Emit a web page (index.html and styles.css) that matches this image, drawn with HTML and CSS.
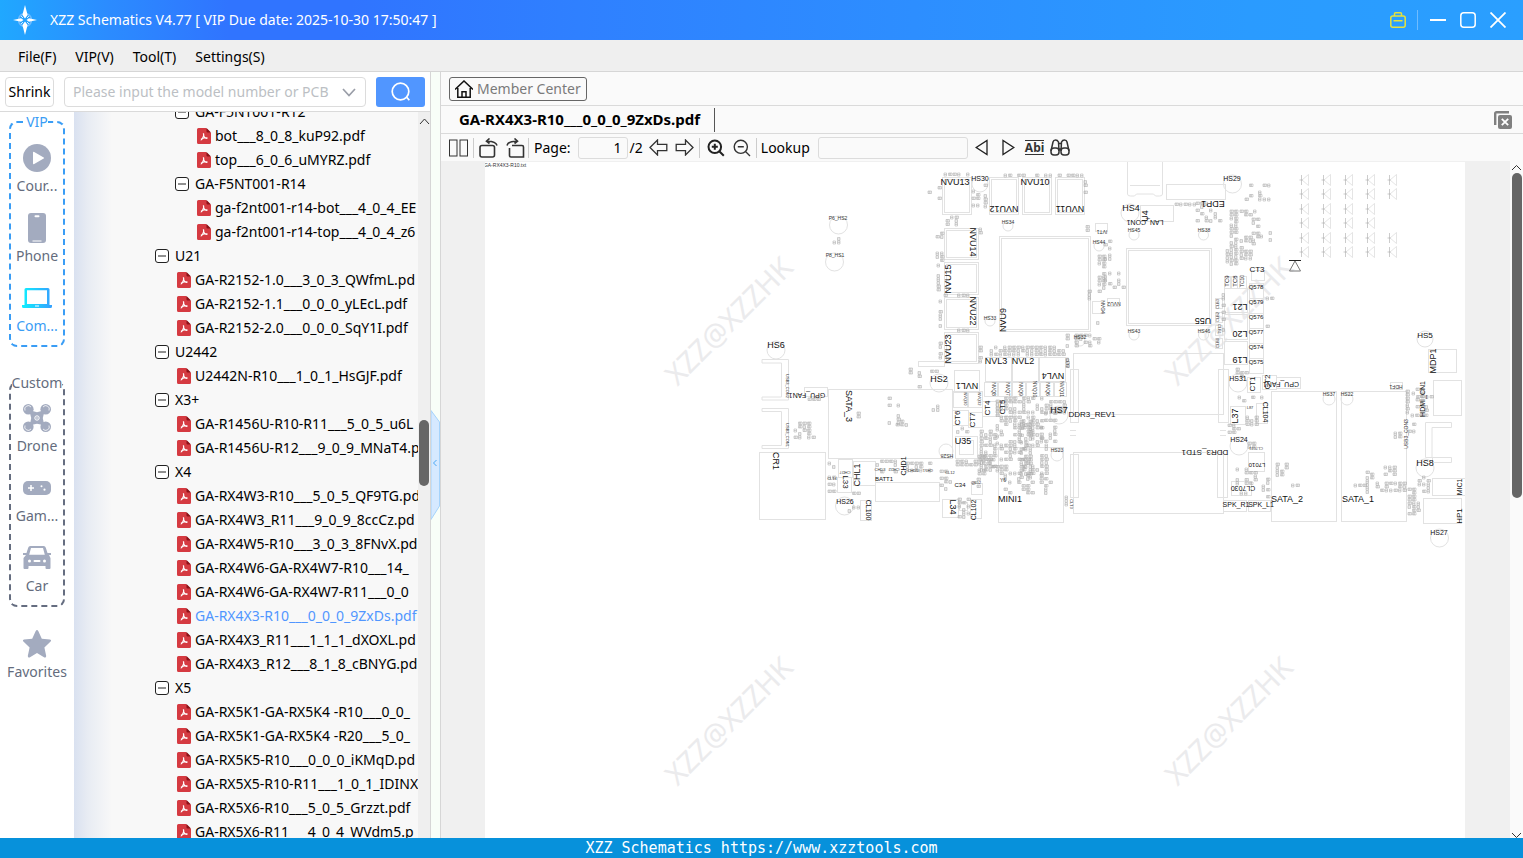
FILE: index.html
```html
<!DOCTYPE html>
<html lang="en">
<head>
<meta charset="utf-8">
<title>XZZ Schematics V4.77</title>
<link rel="stylesheet" href="styles.css">
</head>
<body>
<svg class="defs" aria-hidden="true">
  <symbol id="pdf" viewBox="0 0 14 16">
    <path d="M1.5 0H9l5 5v9.500a1.500 1.500 0 0 1-1.500 1.500h-11A1.500 1.500 0 0 1 0 14.500v-13A1.500 1.500 0 0 1 1.500 0z" fill="#d53a41"/>
    <path d="M9.500 0 14 4.500h-3.500a1 1 0 0 1-1-1z" fill="#8c1219"/>
    <path d="M6.300 5.500c.8 0 .3 2.400-.2 3.500C5.500 10.500 4.500 12.200 3.700 12M4 11.200c1-.7 2-1 3-1.200 1.400-.3 3.400-.4 3.400.4M10 10.500C8.500 10.500 6.800 9 6.300 5.500" fill="none" stroke="#fff" stroke-width="1.100"/>
  </symbol>
  <symbol id="minus" viewBox="0 0 14 14">
    <rect x=".5" y=".5" width="13" height="13" rx="2.500" fill="#fff" stroke="#222"/>
    <path d="M3 7h8" stroke="#222"/>
  </symbol>
</svg>

<header class="titlebar">
  <svg class="logo" width="24" height="30" viewBox="0 0 24 30">
    <circle cx="12" cy="15" r="6.500" fill="none" stroke="#6dbbff" stroke-width="1.500"/>
    <path d="M12 0l2.600 10L12 13.500 9.400 10zM12 30l2.600-10L12 16.500 9.400 20zM0 15l8-1.700L10.500 15 8 16.700zM24 15l-8-1.700L13.500 15l2.500 1.700z" fill="#fff"/>
    <path d="M8 11l2 2M16 11l-2 2M8 19l2-2M16 19l-2-2" stroke="#d5ecff"/>
  </svg>
  <h1 class="title">XZZ Schematics V4.77 [ VIP Due date: 2025-10-30 17:50:47 ]</h1>
  <button class="winbtn" aria-label="License"><svg width="16" height="16" viewBox="0 0 16 16" fill="none" stroke="#e6e23c" stroke-width="1.500"><rect x=".8" y="4" width="14.400" height="11.200" rx="2"/><path d="M4.500 4V1.800a1 1 0 0 1 1-1h5a1 1 0 0 1 1 1V4M3.500 8.800h9"/></svg></button>
  <span class="winsep"></span>
  <button class="winbtn" aria-label="Minimize"><svg width="16" height="16" viewBox="0 0 16 16"><path d="M0 8h16" stroke="#fff" stroke-width="2"/></svg></button>
  <button class="winbtn" aria-label="Maximize"><svg width="16" height="16" viewBox="0 0 16 16"><rect x=".8" y=".8" width="14.400" height="14.400" rx="3" fill="none" stroke="#fff" stroke-width="1.500"/></svg></button>
  <button class="winbtn" aria-label="Close"><svg width="16" height="16" viewBox="0 0 16 16"><path d="M.5.5l15 15M15.500.5l-15 15" stroke="#fff" stroke-width="1.800"/></svg></button>
</header>

<nav class="menubar">
  <button>File(F)</button><button>VIP(V)</button><button>Tool(T)</button><button>Settings(S)</button>
</nav>

<div class="workspace">
  <aside class="side">
    <div class="search">
      <button class="shrink">Shrink</button>
      <div class="combo">
        <input type="text" aria-label="Model number or PCB" placeholder="Please input the model number or PCB">
        <button aria-label="Show history"><svg width="14" height="9" viewBox="0 0 14 9"><path d="M1 1l6 6.500L13 1" fill="none" stroke="#9a9ea8" stroke-width="1.700"/></svg></button>
      </div>
      <button class="go" aria-label="Search"><svg width="20" height="20" viewBox="0 0 20 20" fill="none" stroke="#fff" stroke-width="1.700"><circle cx="9.500" cy="9.500" r="8.300"/><path d="M15.500 15l2.800 3.300"/></svg></button>
    </div>
    <div class="sidebody">
      <div class="rail">
        <fieldset class="group vip">
          <legend>VIP</legend>
          <button class="item"><span class="pic"><svg width="28" height="28" viewBox="0 0 28 28"><circle cx="14" cy="14" r="14" fill="#a3abbf"/><path d="M10 8.500v11a.8.8 0 0 0 1.200.6l9.500-5.500a.7.7 0 0 0 0-1.200l-9.500-5.500a.8.8 0 0 0-1.200.6z" fill="#fff"/></svg></span>Cour...</button>
          <button class="item"><span class="pic"><svg width="18" height="30" viewBox="0 0 18 30"><rect width="18" height="30" rx="3" fill="#a3abbf"/><path d="M7.500 3.200h3" stroke="#fff" stroke-width="2" stroke-linecap="round"/><path d="M4.500 28h9" stroke="#fff"/></svg></span>Phone</button>
          <button class="item on"><span class="pic"><svg width="30" height="20" viewBox="0 0 30 20"><defs><linearGradient id="lap"><stop offset="0" stop-color="#0ff0ff"/><stop offset="1" stop-color="#35a0ff"/></linearGradient></defs><path fill="url(#lap)" fill-rule="evenodd" d="M4 0h22a1.500 1.500 0 0 1 1.500 1.500V17H30v1.500a1.500 1.500 0 0 1-1.500 1.500h-27A1.500 1.500 0 0 1 0 18.500V17h2.500V1.500A1.500 1.500 0 0 1 4 0zM5 2.200V16h20V2.200zM13 17.500v.9h4v-.9z"/></svg></span>Com...</button>
        </fieldset>
        <fieldset class="group custom">
          <legend>Custom</legend>
          <button class="item"><span class="pic"><svg width="28" height="28" viewBox="0 0 28 28"><path d="M6 6q8 6.500 16 0q-6.500 8 0 16q-8-6.500-16 0q6.500-8 0-16z" fill="#a3abbf" stroke="#a3abbf" stroke-width="2"/><g fill="#a3abbf"><circle cx="5.300" cy="5.300" r="5.300"/><circle cx="22.700" cy="5.300" r="5.300"/><circle cx="5.300" cy="22.700" r="5.300"/><circle cx="22.700" cy="22.700" r="5.300"/></g><g fill="none" stroke="#fff" stroke-width=".8"><path d="M2 6.500A3.500 3.500 0 0 1 8 3M20 3a3.500 3.500 0 0 1 6 3.500M2 21.500a3.500 3.500 0 0 0 6 3.500M20 25a3.500 3.500 0 0 0 6-3.500"/></g><circle cx="14" cy="14" r="2.200" fill="none" stroke="#fff"/><circle cx="14" cy="14" r=".7" fill="#fff"/></svg></span>Drone</button>
          <button class="item"><span class="pic"><svg width="28" height="14" viewBox="0 0 28 14"><rect width="28" height="14" rx="5" fill="#a3abbf"/><path d="M8 4v6M5 7h6" stroke="#fff" stroke-width="1.500"/><circle cx="18.500" cy="5.300" r="1" fill="#fff"/><circle cx="21.500" cy="8.700" r="1.100" fill="#fff"/></svg></span>Gam...</button>
          <button class="item"><span class="pic"><svg width="28" height="23" viewBox="0 0 28 23"><path fill="#a3abbf" fill-rule="evenodd" d="M7.500 0h13c1.300 0 2 .8 2.400 2l1.600 5H28v2h-2l1.500 3v10a1 1 0 0 1-1 1h-3a1 1 0 0 1-1-1v-2h-17v2a1 1 0 0 1-1 1h-3a1 1 0 0 1-1-1V12L3 9H0V7h3.500l1.600-5C5.500.8 6.200 0 7.500 0zM8 2 6.200 8.700h15.600L20 2z"/><g fill="#fff"><circle cx="6.500" cy="15" r="1.500"/><circle cx="21.500" cy="15" r="1.500"/><rect x="10.500" y="14" width="7" height="2" rx="1"/></g></svg></span>Car</button>
        </fieldset>
        <button class="item fav"><span class="pic"><svg width="30" height="28" viewBox="0 0 30 28"><path d="M13.600 1.200q1.400-2.200 2.800 0l3.400 7.500 8.200.8q1.800.5.600 2l-6.200 6 1.800 8.500q0 2-1.800 1.500L15 23l-7.400 4.500q-1.800.5-1.800-1.500l1.800-8.500-6.200-6q-1.200-1.500.6-2l8.200-.8z" fill="#a3abbf"/></svg></span>Favorites</button>
      </div>
      <div class="treepane">
        <ul class="tree" id="tree"></ul>
      </div>
      <div class="vscroll"><svg width="12" height="12" viewBox="0 0 12 12"><path d="M2 9l4.500-5L11 9" fill="none" stroke="#333"/></svg><span class="thumb"></span></div>
    </div>
  </aside>

  <div class="splitter">
    <button class="collapse" aria-label="Collapse panel"><svg width="9" height="110" viewBox="0 0 9 110"><path d="M0 .5 8.500 12v84L0 109.500z" fill="#d6e9ff" stroke="#a5d3fb"/><path d="M5.500 50 2.500 53l3 3" fill="none" stroke="#4ba8f5"/></svg></button>
  </div>

  <main class="docs">
    <div class="member"><button class="center"><svg width="18" height="18" viewBox="0 0 18 18" fill="none" stroke="#111" stroke-width="1.500"><path d="M0 9.500 9 1l9 8.500M2.800 8v9.200h12.400V8"/><path d="M7 17v-5.200h4V17"/></svg>Member Center</button></div>
    <div class="tabs">
      <button class="tab">GA-RX4X3-R10___0_0_0_9ZxDs.pdf</button>
      <button class="closeall" aria-label="Close all"><svg width="18" height="18" viewBox="0 0 18 18"><path d="M1.200 14V2.500a1.300 1.300 0 0 1 1.300-1.300H15" fill="none" stroke="#808080" stroke-width="2.400"/><rect x="4" y="4" width="14" height="14" rx="2" fill="#808080"/><path d="M7.800 7.800l6.400 6.400M14.200 7.800l-6.400 6.400" stroke="#fff" stroke-width="1.800"/></svg></button>
    </div>
    <div class="toolbar">
      <button aria-label="Two pages"><svg width="19" height="18" viewBox="0 0 19 18" fill="none" stroke="#333"><rect x=".5" y="1" width="7.500" height="16"/><rect x="11" y="1" width="7.500" height="16"/></svg></button>
      <span class="sep"></span>
      <button class="rot" aria-label="Rotate left"><svg width="19" height="20" viewBox="0 0 19 20" fill="none" stroke="#333" stroke-width="1.600"><rect x="1" y="7.500" width="14.500" height="11.500" rx="2"/><path d="M18 7.500C17 4 13 3 7.500 3.200M10.500 .5 7.500 3.200l3 2.300"/></svg></button>
      <button class="rot" aria-label="Rotate right"><svg width="19" height="20" viewBox="0 0 19 20" fill="none" stroke="#333" stroke-width="1.600"><path d="M3.500 10V17.500a1.500 1.500 0 0 0 1.500 1.500H17.500V9a1.500 1.500 0 0 0-1.500-1.500H6M1 7.500C2 4 6 3 11.500 3.200M8.500 .5l3 2.700-3 2.300"/></svg></button>
      <span class="sep"></span>
      <label for="page">Page:</label>
      <input id="page" class="page" type="text" value="1">
      <span class="total">/2</span>
      <button aria-label="Previous page"><svg width="19" height="17" viewBox="0 0 19 17" fill="none" stroke="#333" stroke-width="1.300"><path d="M1 8.500 8.500 1v4.300h9.300v6.400H8.500V16z"/></svg></button>
      <button class="next" aria-label="Next page"><svg width="19" height="17" viewBox="0 0 19 17" fill="none" stroke="#333" stroke-width="1.300"><path d="M18 8.500 10.500 1v4.300H1.200v6.400h9.300V16z"/></svg></button>
      <span class="sep"></span>
      <button class="zoom" aria-label="Zoom in"><svg width="18" height="18" viewBox="0 0 18 18" fill="none" stroke="#222" stroke-width="2"><circle cx="7.800" cy="7.800" r="6.300"/><path d="M12.500 12.500 16.800 16.800M4.800 7.800h6M7.800 4.800v6"/></svg></button>
      <button class="zoom" aria-label="Zoom out"><svg width="18" height="18" viewBox="0 0 18 18" fill="none" stroke="#333" stroke-width="1.400"><circle cx="7.800" cy="7.800" r="6.600"/><path d="M12.500 12.500 17 17M4.800 7.800h6"/></svg></button>
      <span class="sep"></span>
      <label for="lookup">Lookup</label>
      <input id="lookup" class="lookup" type="text">
      <button aria-label="Find previous"><svg width="13" height="17" viewBox="0 0 13 17"><path d="M12 1.500v14L1.200 8.500z" fill="none" stroke="#222" stroke-width="1.300"/></svg></button>
      <button class="fwd" aria-label="Find next"><svg width="13" height="17" viewBox="0 0 13 17"><path d="M1 1.500v14l10.800-7z" fill="none" stroke="#222" stroke-width="1.300"/></svg></button>
      <button class="abi">Abi</button>
      <button class="bino" aria-label="Find"><svg width="20" height="17" viewBox="0 0 20 17" fill="none" stroke="#333" stroke-width="1.500"><path d="M1 12 3 3q.5-2 2.500-2T8.500 3L9 12M19 12 17 3q-.5-2-2.500-2t-3 2L11 12M8.800 4.500h2.400M9 10h2"/><rect x="1" y="9" width="8" height="7" rx="3"/><rect x="11" y="9" width="8" height="7" rx="3"/></svg></button>
    </div>
    <div class="viewer">
      <div class="sheet">
        <svg id="board" class="board" viewBox="485 162 980 676" role="img" aria-label="Board layout"></svg>
      </div>
      <div class="pagescroll">
        <svg width="12" height="12" viewBox="0 0 12 12"><path d="M2 9l4.500-4.500L11 9" fill="none" stroke="#333"/></svg>
        <span class="thumb"></span>
        <svg width="12" height="6" viewBox="0 0 12 6"><path d="M2 1l4.500 4.500L11 1" fill="none" stroke="#333"/></svg>
      </div>
    </div>
  </main>
</div>

<footer class="status">XZZ Schematics https://www.xzztools.com</footer>
<script src="app.js"></script>
</body>
</html>
```
FILE: styles.css
```css
* { box-sizing: border-box; }
html, body { height: 100%; margin: 0; }
body {
  display: flex;
  flex-direction: column;
  overflow: hidden;
  background: #fafafa;
  color: #000;
  font: 14px/20px "Noto Sans", "Open Sans", sans-serif;
}
button, input { font: inherit; color: inherit; }
button { margin: 0; padding: 0; border: 0; background: none; cursor: pointer; }
svg { display: block; flex: none; }
.defs { position: absolute; width: 0; height: 0; }

.titlebar {
  flex: none;
  display: flex;
  align-items: center;
  height: 40px;
  padding: 0 17px 0 13px;
  color: #fff;
  background: linear-gradient(90deg, #20a8ff 0, #2b8cff 7%, #3074ff 15%, #3074ff 23%, #2f80ff 38%, #2d8eff 60%, #2a9bff 82%, #2a9fff 100%);
}
.title { flex: 1; margin: 0 0 0 13px; font-size: 14px; font-weight: 400; white-space: nowrap; }
.winbtn { width: 16px; height: 16px; margin-left: 14px; }
.winsep { width: 1px; height: 20px; margin-left: 11px; margin-right: -2px; background: #6fbcff; }

.menubar {
  flex: none;
  display: flex;
  gap: 19px;
  height: 32px;
  padding: 2px 18px 0;
  background: #efefef;
  border-bottom: 1px solid #d6d6d6;
}

.workspace { flex: 1; display: flex; min-height: 0; }
.side { flex: none; display: flex; flex-direction: column; width: 431px; border-right: 1px solid #d6d6d6; }
.search {
  flex: none;
  display: flex;
  align-items: center;
  height: 40px;
  padding: 1px 5px 0;
  background: #fff;
  border-bottom: 1px solid #dadada;
}
.shrink { width: 49px; height: 30px; border: 1px solid #dcdcdc; border-radius: 4px; background: #fff; }
.combo {
  flex: 1;
  display: flex;
  align-items: center;
  height: 30px;
  margin: 0 10px;
  padding: 0 9px 0 8px;
  border: 1px solid #dcdcdc;
  border-radius: 4px;
}
.combo input { flex: 1; min-width: 0; padding: 0; border: 0; outline: 0; background: none; }
.combo input::placeholder { color: #bcbfc4; opacity: 1; }
.go { display: flex; align-items: center; justify-content: center; width: 49px; height: 30px; border-radius: 3px; background: #5196ff; }

.sidebody { flex: 1; display: flex; min-height: 0; }
.rail { flex: none; width: 74px; background: #fff; color: #646c7d; overflow: hidden; }
.group { display: flex; flex-direction: column; gap: 13px; min-width: 0; width: 56px; margin: 0 9px; padding: 7px 0 9px; border: 2px dashed #3a9df5; border-radius: 8px; }
.group legend { margin: 0 auto; padding: 0; line-height: 20px; }
.vip legend { color: #3a9df5; }
.custom { margin-top: 26px; border-color: #656d80; padding: 6px 0 9px; }
.item { display: flex; flex-direction: column; align-items: center; width: 100%; }
.item.on { color: #3a9df5; }
.pic { display: flex; align-items: center; justify-content: center; height: 37px; }
.fav { width: 74px; margin-top: 18px; }

.treepane { flex: 1; min-width: 0; overflow: hidden; background: linear-gradient(90deg, #d9e1f0 0, #e8ecf3 14px, #f8f8f8 38px); }
.tree { margin: -12px 0 0; padding: 0; list-style: none; }
.tree button { display: flex; align-items: center; gap: 4px; height: 24px; padding-left: 103px; white-space: nowrap; }
.tree .folder { gap: 6px; padding-left: 81px; }
.tree .deep { padding-left: 123px; }
.tree .folder.deep { padding-left: 101px; }
.tree .picked { color: #5196ff; }
.vscroll { flex: none; width: 12px; background: #efefef; }
.thumb { display: block; border-radius: 5px; background: #666; }
.vscroll svg { margin-top: 3px; }
.vscroll .thumb { width: 10px; height: 66px; margin: 293px 1px 0; }

.splitter { flex: none; width: 10px; padding-top: 338px; background: #f8fef8; border-right: 1px solid #d6d6d6; }

.docs { flex: 1; display: flex; flex-direction: column; min-width: 0; }
.member { flex: none; height: 34px; padding: 5px 8px; border-bottom: 1px solid #dadada; }
.center { display: flex; align-items: center; gap: 4px; height: 24px; padding: 0 5px; border: 1px solid #666; border-radius: 3px; color: #7a7a7a; white-space: nowrap; }
.tabs { flex: none; display: flex; align-items: center; justify-content: space-between; height: 28px; padding: 0 11px 0 8px; border-bottom: 1px solid #dadada; }
.tab { height: 24px; padding: 0 14px 2px 10px; border-right: 1px solid #555; font-size: 15px; font-weight: 700; white-space: nowrap; }
.toolbar { flex: none; display: flex; align-items: center; height: 27px; padding: 0 0 0 8px; }
.sep { width: 1px; height: 20px; margin: 0 5px; background: #ccc; }
.rot { margin-right: 8px; }
.rot + .sep { margin-left: -5px; }
.toolbar input { height: 22px; border: 1px solid #dcdcdc; border-radius: 3px; background: #fafafa; outline: 0; padding: 0 5px; }
.page { width: 50px; margin: 0 2px 0 7px; text-align: right; }
.total { margin-right: 6px; }
.next { margin-left: 7px; }
.zoom { margin: 0 6px 0 2px; }
.zoom + .sep { margin: 0 4px 0 -1px; }
.lookup { width: 150px; margin: 0 7px 0 8px; }
.fwd { margin: 0 10px 0 14px; }
.abi { height: 15px; border-top: 1px solid #333; border-bottom: 1px solid #333; font-size: 12px; line-height: 12px; font-weight: 700; color: #333; }
.bino { margin-left: 6px; }

.viewer { flex: 1; display: flex; min-height: 0; background: #f0f0f0; }
.sheet { flex: 1; min-width: 0; overflow: hidden; padding: 1px 45px 0 44px; }
.board { width: 100%; height: auto; background: #fff; font-family: "Liberation Sans", Arial, sans-serif; }
.board text { text-anchor: middle; dominant-baseline: central; fill: #111; }
.board .small { fill: #333; }
.board .mark { font-family: "Noto Sans", sans-serif; font-size: 29px; fill: #ebebed; }
.board .part { fill: none; stroke: #e2e2e2; stroke-width: 1; }
.board .tiny { fill: none; stroke: #a4a4a4; stroke-width: .5; }
.board .diode { fill: none; stroke: #d4d4d4; stroke-width: .6; }
.board .bar { fill: none; stroke: #aaa; stroke-width: .6; }
.pagescroll { flex: none; display: flex; flex-direction: column; width: 13px; background: #fafafa; }
.pagescroll .thumb { width: 10px; height: 325px; margin: 0 auto; }
.pagescroll svg:last-child { margin-top: auto; }

.status {
  flex: none;
  height: 20px;
  background: #0791db;
  color: #fff;
  text-align: center;
  font: 15px/20px "DejaVu Sans Mono", "Liberation Mono", monospace;
}
```
FILE: app.js
```js
const NS = 'http://www.w3.org/2000/svg';

/* ---- file tree: "+" folder, "-" file, doubled sign for the deeper level ---- */
const rows = `++GA-F5NT001-R12
--bot___8_0_8_kuP92.pdf
--top___6_0_6_uMYRZ.pdf
++GA-F5NT001-R14
--ga-f2nt001-r14-bot___4_0_4_EE
--ga-f2nt001-r14-top___4_0_4_z6
+U21
-GA-R2152-1.0___3_0_3_QWfmL.pd
-GA-R2152-1.1___0_0_0_yLEcL.pdf
-GA-R2152-2.0___0_0_0_SqY1I.pdf
+U2442
-U2442N-R10___1_0_1_HsGJF.pdf
+X3+
-GA-R1456U-R10-R11___5_0_5_u6L
-GA-R1456U-R12___9_0_9_MNaT4.p
+X4
-GA-RX4W3-R10___5_0_5_QF9TG.pd
-GA-RX4W3_R11___9_0_9_8ccCz.pd
-GA-RX4W5-R10___3_0_3_8FNvX.pd
-GA-RX4W6-GA-RX4W7-R10___14_
-GA-RX4W6-GA-RX4W7-R11___0_0
-GA-RX4X3-R10___0_0_0_9ZxDs.pdf
-GA-RX4X3_R11___1_1_1_dXOXL.pd
-GA-RX4X3_R12___8_1_8_cBNYG.pd
+X5
-GA-RX5K1-GA-RX5K4 -R10___0_0_
-GA-RX5K1-GA-RX5K4 -R20___5_0_
-GA-RX5K5-R10___0_0_0_iKMqD.pd
-GA-RX5X5-R10-R11___1_0_1_IDINX
-GA-RX5X6-R10___5_0_5_Grzzt.pdf
-GA-RX5X6-R11___4_0_4_WVdm5.p`.split('\n');
const tree = document.getElementById('tree');
for (const row of rows) {
  const folder = row[0] === '+';
  const deep = row[1] === row[0];
  const name = row.slice(deep ? 2 : 1);
  const li = document.createElement('li');
  const b = document.createElement('button');
  if (folder) b.classList.add('folder');
  if (deep) b.classList.add('deep');
  if (name.startsWith('GA-RX4X3-R10')) b.classList.add('picked');
  b.innerHTML = folder
    ? '<svg width="14" height="14"><use href="#minus"/></svg>'
    : '<svg width="14" height="16"><use href="#pdf"/></svg>';
  b.append(name);
  li.append(b);
  tree.append(li);
}

/* ---- board drawing ---- */
const board = document.getElementById('board');
function add(tag, attrs, text) {
  const el = document.createElementNS(NS, tag);
  for (const k in attrs) el.setAttribute(k, attrs[k]);
  if (text) el.textContent = text;
  board.append(el);
}

for (const [x, y] of [[728, 320], [1228, 320], [728, 720], [1228, 720]])
  add('text', { class: 'mark', transform: `translate(${x} ${y}) rotate(-45)` }, 'XZZ@XZZHK');

/* outlines: x, y, width, height, optional inset of a second outline */
const parts = [
  [942, 177, 29, 37, 2], [989, 177, 29, 37, 2], [1022, 177, 29, 37, 2], [1055, 177, 29, 37, 2],
  [944, 228, 34, 31, 2], [944, 262, 34, 32, 2], [944, 297, 34, 32, 2], [944, 332, 34, 31, 2],
  [999, 236, 91, 95, 2], [1126, 248, 85, 77, 2], [1166, 184, 59, 15], [1140, 205, 33, 16],
  [828, 389, 124, 69], [759, 452, 66, 67], [875, 482, 64, 19], [804, 387, 23, 9], [954, 370, 25, 22],
  [853, 461, 22, 24], [837, 477, 14, 15], [838, 459, 14, 18], [860, 500, 11, 20], [918, 361, 26, 5],
  [985, 357, 26, 24], [1012, 357, 26, 24], [1039, 357, 26, 24],
  [984, 382, 13, 14], [998, 382, 13, 14], [1012, 382, 13, 14], [1026, 382, 13, 14], [1040, 382, 13, 14], [1054, 382, 12, 14],
  [953, 391, 14, 16], [968, 391, 14, 16], [952, 410, 16, 15], [968, 412, 14, 15], [982, 401, 14, 15], [998, 401, 14, 15],
  [955, 436, 22, 22, 4], [998, 447, 65, 75], [942, 499, 16, 18], [970, 499, 11, 19], [971, 483, 11, 11], [959, 502, 8, 8],
  [1073, 353, 150, 61], [1073, 452, 150, 61], [1070, 369, 8, 53], [1070, 454, 8, 43], [1218, 369, 10, 53], [1217, 454, 10, 43],
  [1092, 301, 11, 12], [1107, 298, 12, 8], [1095, 223, 12, 8],
  [1224, 288, 23, 24], [1224, 314, 23, 25], [1224, 341, 23, 23], [1249, 283, 14, 90],
  [1249, 298, 14, 15], [1249, 328, 14, 15], [1249, 343, 14, 15], [1251, 270, 13, 10],
  [1247, 377, 13, 15], [1262, 375, 14, 14], [1276, 377, 24, 11], [1230, 406, 15, 18], [1256, 403, 11, 20],
  [1248, 452, 16, 19], [1231, 481, 20, 14], [1223, 500, 23, 11], [1248, 500, 22, 11],
  [1271, 391, 65, 130], [1341, 391, 65, 130], [1390, 382, 12, 7],
  [1428, 349, 28, 23], [1433, 380, 28, 35], [1432, 478, 33, 17], [1423, 498, 38, 25],
  [1224, 276, 6, 12], [1231, 276, 6, 12], [1239, 276, 7, 12],
  [1215, 298, 7, 10], [1215, 312, 7, 10], [1215, 325, 7, 10], [1215, 338, 7, 10]
];
for (const [x, y, width, height, inset] of parts) {
  add('rect', { class: 'part', x: x + .5, y: y + .5, width, height });
  if (inset) add('rect', { class: 'part', x: x + .5 + inset, y: y + .5 + inset, width: width - 2 * inset, height: height - 2 * inset });
}
const lines = [
  'M762 359.500h26.500v40.500h-26.500v-3h19.500v-34h-19.500z', 'M762 408.500h26.500v40h-26.500v-3h19.500v-34h-19.500z',
  'M1425.500 422.500h26v5h-19.500v30h19.500v5h-19v-5h-7z', 'M1127.500 162v32q0 2 3 2h4l2-2h17l2 2h4q3 0 3-2v-32M1130 185.500h30',
  'M1070 430.500h6M1070 435.500h6M1220 430.500h6M1220 435.500h6'
];
for (const d of lines) add('path', { class: 'part', d });

for (const [cx, cy, r] of [
  [838.500, 225, 9], [834.500, 262, 9], [776, 350, 9], [939, 383, 9], [980, 184, 8], [844.500, 506, 9], [946, 451, 7],
  [990, 321, 5], [1008, 226, 5], [1130, 213, 9], [1134, 235, 5], [1203.500, 235, 5], [1099, 246, 5], [1080, 341, 5],
  [1134, 335, 5], [1203.500, 335, 5], [1059, 415, 9], [1057, 455, 6], [1232.500, 184, 9], [1238, 383, 9],
  [1239, 446, 9], [1329, 399, 6], [1347, 399, 6], [1425, 339, 8], [1425, 468, 9], [1439.500, 538, 9]
]) add('circle', { class: 'part', cx, cy, r });

/* small passives: regions filled with rows of 3px outlines, with a share of places used */
let seed = 7;
const rnd = () => (seed = (seed * 16807) % 2147483647) / 2147483647;
for (const [x, y, w, h, share = .75] of [
  [944, 173, 26, 3], [1004, 174, 80, 3, .7], [938, 183, 3, 22, .5], [928, 191, 6, 4], [972, 190, 8, 20, .5], [984, 184, 4, 24, .6],
  [946, 216, 14, 10, .5], [936, 225, 7, 14, .7], [936, 252, 7, 10], [937, 264, 6, 28, .6], [939, 300, 4, 30, .6], [939, 335, 4, 24, .8],
  [944, 294, 30, 3, .6], [944, 329, 30, 3, .6], [979, 346, 6, 16, .6], [979, 228, 6, 6, .4], [1084, 177, 5, 20, .5],
  [833, 234, 8, 10], [794, 422, 20, 18, .5], [808, 398, 18, 4, .5], [857, 388, 8, 14, .3], [857, 412, 5, 30, .5],
  [888, 390, 12, 34, .35], [896, 420, 14, 8], [909, 368, 12, 22, .5], [926, 370, 20, 4, .6], [932, 405, 8, 12, .5],
  [828, 462, 10, 32, .5], [876, 460, 22, 14, .5], [906, 462, 28, 12, .45], [848, 492, 14, 24, .4],
  [940, 470, 18, 22, .5], [956, 460, 22, 8], [958, 498, 14, 20, .6], [968, 478, 14, 14, .4], [952, 427, 28, 6, .5],
  [990, 346, 76, 10, .85], [1000, 397, 66, 16, .65], [980, 430, 18, 46, .7], [1000, 416, 44, 28, .65], [1000, 444, 50, 30, .5],
  [1020, 420, 14, 60, .7], [1004, 474, 50, 20, .4], [996, 400, 5, 46, .6], [1040, 412, 16, 30, .5], [978, 455, 20, 22, .5],
  [1104, 240, 10, 22, .7], [1098, 255, 8, 40, .7], [1104, 272, 22, 16, .4], [1066, 334, 34, 14, .55], [1088, 290, 6, 10],
  [1066, 358, 5, 12], [1065, 496, 6, 12], [1086, 222, 6, 10], [1092, 318, 8, 12, .5],
  [1175, 203, 22, 4, 1], [1196, 202, 26, 22, .5], [1230, 210, 9, 56, .95], [1240, 210, 18, 8, .7], [1226, 246, 10, 16, .6],
  [1240, 236, 14, 26, .65], [1252, 218, 8, 28, .6], [1260, 228, 14, 14, .45], [1245, 184, 26, 16, .3], [1222, 290, 3, 60, .3],
  [1266, 290, 8, 12, .3], [1266, 318, 8, 12, .4], [1236, 368, 14, 10, .5], [1238, 396, 26, 6, .6], [1246, 416, 12, 10, .7],
  [1228, 424, 14, 10, .5], [1248, 442, 14, 6], [1236, 468, 20, 16, .4], [1262, 478, 8, 20, .4], [1240, 492, 10, 4],
  [1276, 463, 12, 14, .8], [1287, 484, 12, 4], [1366, 471, 10, 8], [1354, 484, 14, 4], [1366, 473, 10, 20, .6],
  [1376, 482, 30, 10, .65], [1384, 466, 14, 10, .45], [1394, 432, 10, 6], [1406, 390, 5, 26, .9], [1411, 414, 16, 4, 1],
  [1416, 388, 14, 24, .35], [1408, 423, 16, 12, .4], [1408, 488, 14, 28, .7], [1418, 476, 12, 18, .7], [1412, 392, 20, 6, .7]
]) {
  let d = '';
  for (let j = 0; j + 2 <= h; j += 3.500)
    for (let i = 0; i + 2 <= w; i += 4.500)
      if (rnd() < share) {
        const X = x + i, Y = y + j;
        d += rnd() < .6 ? `M${X} ${Y}h3.500v2.500h-3.500zM${X + 1} ${Y}v2.500M${X + 2} ${Y}v2.500` : `M${X} ${Y}h2.500v3h-2.500zM${X} ${Y + 1.500}h2.500`;
      }
  add('path', { class: 'tiny', d });
}

[1300, 1322, 1344, 1366, 1388].forEach((x, col) => {
  [174, 188, 203, 217, 232, 246].forEach((y, r) => {
    if (col === 4 && (r === 2 || r === 3)) return;
    add('path', { class: 'diode', d: `M${x + 8.500} ${y + .5}v11l-6.500-5.500z` });
    add('path', { class: 'bar', d: `M${x + 1.500} ${y + 1}v10M${x - .5} ${y + 6}h3` });
  });
});
add('path', { d: 'M1289 260.500h12', stroke: '#222', fill: 'none' });
add('path', { d: 'M1295 261l5.500 10h-11z', stroke: '#777', fill: 'none' });

/* labels: text, centre x, centre y, size, rotation */
for (const [t, x, y, size, rot = 0] of [
  ['GA-RX4X3-R10.txt', 505, 165, 5],
  ['NVU13', 955, 182, 9], ['HS30', 980, 178, 7], ['NVU12', 1004, 209, 9, 180], ['NVU10', 1035, 182, 9], ['NVU11', 1070, 209, 9, 180],
  ['P6_HS2', 838, 218, 5], ['P8_HS1', 835, 255, 5], ['NVU14', 973, 242, 9, 90], ['NVU15', 948, 279, 9, -90],
  ['NVU22', 973, 311, 9, 90], ['NVU23', 948, 349, 9, -90], ['HS33', 990, 318, 5], ['HS6', 776, 345, 9], ['HS2', 939, 379, 9],
  ['NVL1', 967, 386, 9, 180], ['NVL3', 996, 361, 9], ['NVL2', 1023, 361, 9], ['NVL4', 1053, 376, 9, 180],
  ['GPU_FAN1', 807, 395, 7, 180], ['SATA_3', 849, 406, 9, 90], ['USB3_CON2', 787, 386, 4, 90], ['USB3_CON1', 787, 435, 4, 90],
  ['CT6', 957, 418, 8, -90], ['CT7', 972, 420, 8, -90], ['CT4', 987, 408, 8, -90], ['CT5', 1002, 407, 8, -90],
  ['U35', 963, 441, 9], ['HS28', 947, 456, 5, 180], ['CR1', 776, 461, 9, 90], ['CHL1', 857, 475, 9, -90], ['CHD1', 903, 466, 7, -90],
  ['L33', 845, 482, 8, 90], ['BATT1', 884, 479, 6], ['HS26', 845, 501, 7], ['CL100', 868, 510, 7, 90], ['L34', 953, 507, 9, 90],
  ['CL102', 973, 510, 7, -90], ['C34', 960, 485, 6], ['Q652', 976, 482, 4], ['CHD3', 880, 469, 4], ['CHD2', 894, 469, 4, 180],
  ['CL14', 832, 478, 4], ['CHD7', 845, 472, 4, 180], ['CHD5', 913, 470, 4], ['CL12', 950, 472, 4], ['CH51', 928, 470, 4, 180],
  ['HS34', 1008, 222, 5], ['HS4', 1131, 208, 9], ['U4', 1145, 216, 9, -90], ['LAN_CON1', 1145, 222, 7, 180], ['EDP1', 1213, 204, 9, 180],
  ['HS29', 1232, 178, 7], ['HS45', 1134, 230, 5], ['HS38', 1204, 230, 5], ['HS44', 1099, 242, 5], ['IVT1', 1102, 232, 5, 180],
  ['NVU9', 1003, 320, 9, -90], ['HS32', 1080, 337, 5], ['HS43', 1134, 331, 5], ['HS46', 1204, 331, 5], ['U55', 1203, 321, 9, 180],
  ['NVG4', 1103, 307, 5, 90], ['NVU2', 1114, 304, 5, 180],
  ['NVQ8', 994, 389, 5, 90], ['NVQ7', 1008, 389, 5, 90], ['NVQ9', 1021, 389, 5, 90], ['NVQ10', 1035, 389, 5, 90], ['NVQ6', 1048, 389, 5, 90], ['NVQ11', 1062, 389, 5, 90],
  ['NVQ30', 965, 399, 4, 90], ['NVQ32', 979, 399, 4, 90],
  ['HS7', 1059, 410, 9], ['DDR3_REV1', 1092, 414, 8], ['DDR3_STD1', 1205, 452, 8, 180], ['HS23', 1057, 450, 5], ['Y6', 1003, 480, 5], ['MINI1', 1010, 499, 9],
  ['CLT3', 1071, 504, 4, 90], ['CLT2', 1067, 363, 4, 90],
  ['CT3', 1257, 269, 8], ['TC9', 1227, 281, 6, -90], ['TC8', 1235, 281, 6, -90], ['TC10', 1242, 281, 5, -90],
  ['Q578', 1256, 287, 6], ['Q579', 1256, 302, 6], ['Q576', 1256, 317, 6], ['Q577', 1256, 332, 6], ['Q574', 1256, 347, 6], ['Q575', 1256, 362, 6],
  ['L21', 1240, 307, 9, 180], ['L20', 1240, 334, 9, 180], ['L19', 1240, 360, 9, 180],
  ['CLB3', 1217, 304, 4, -90], ['CLB2', 1217, 317, 4, -90], ['CLB1', 1219, 329, 4, 90], ['CLB0', 1217, 343, 4, -90],
  ['HS31', 1238, 378, 7], ['CT1', 1252, 384, 8, -90], ['CT2', 1267, 382, 8, -90], ['CPU_FAN1', 1281, 384, 7, 180], ['L37', 1235, 416, 9, -90],
  ['L87', 1250, 407, 4], ['CL104', 1265, 412, 7, 90], ['HS24', 1239, 439, 7], ['CL7031', 1256, 448, 4, 180], ['L7010', 1257, 465, 6, 180],
  ['CL7030', 1243, 488, 7, 180], ['SPK_R1', 1236, 504, 7], ['SPK_L1', 1261, 504, 7], ['SATA_2', 1287, 499, 9], ['SATA_1', 1358, 499, 9],
  ['HS37', 1329, 394, 5], ['HS22', 1347, 394, 5], ['HDF1', 1396, 387, 5, 180], ['HDMI_CN1', 1422, 399, 7, -90], ['MDP1', 1433, 361, 9, -90],
  ['HS5', 1425, 335, 8], ['HS8', 1425, 463, 9], ['USB3_CON3', 1406, 434, 5, -90], ['MIC1', 1459, 487, 7, -90], ['HP1', 1459, 516, 8, -90], ['HS27', 1439, 532, 7]
]) {
  const attrs = { 'font-size': size, transform: `translate(${x} ${y}) rotate(${rot})` };
  if (size < 6) attrs.class = 'small';
  add('text', attrs, t);
}
```
